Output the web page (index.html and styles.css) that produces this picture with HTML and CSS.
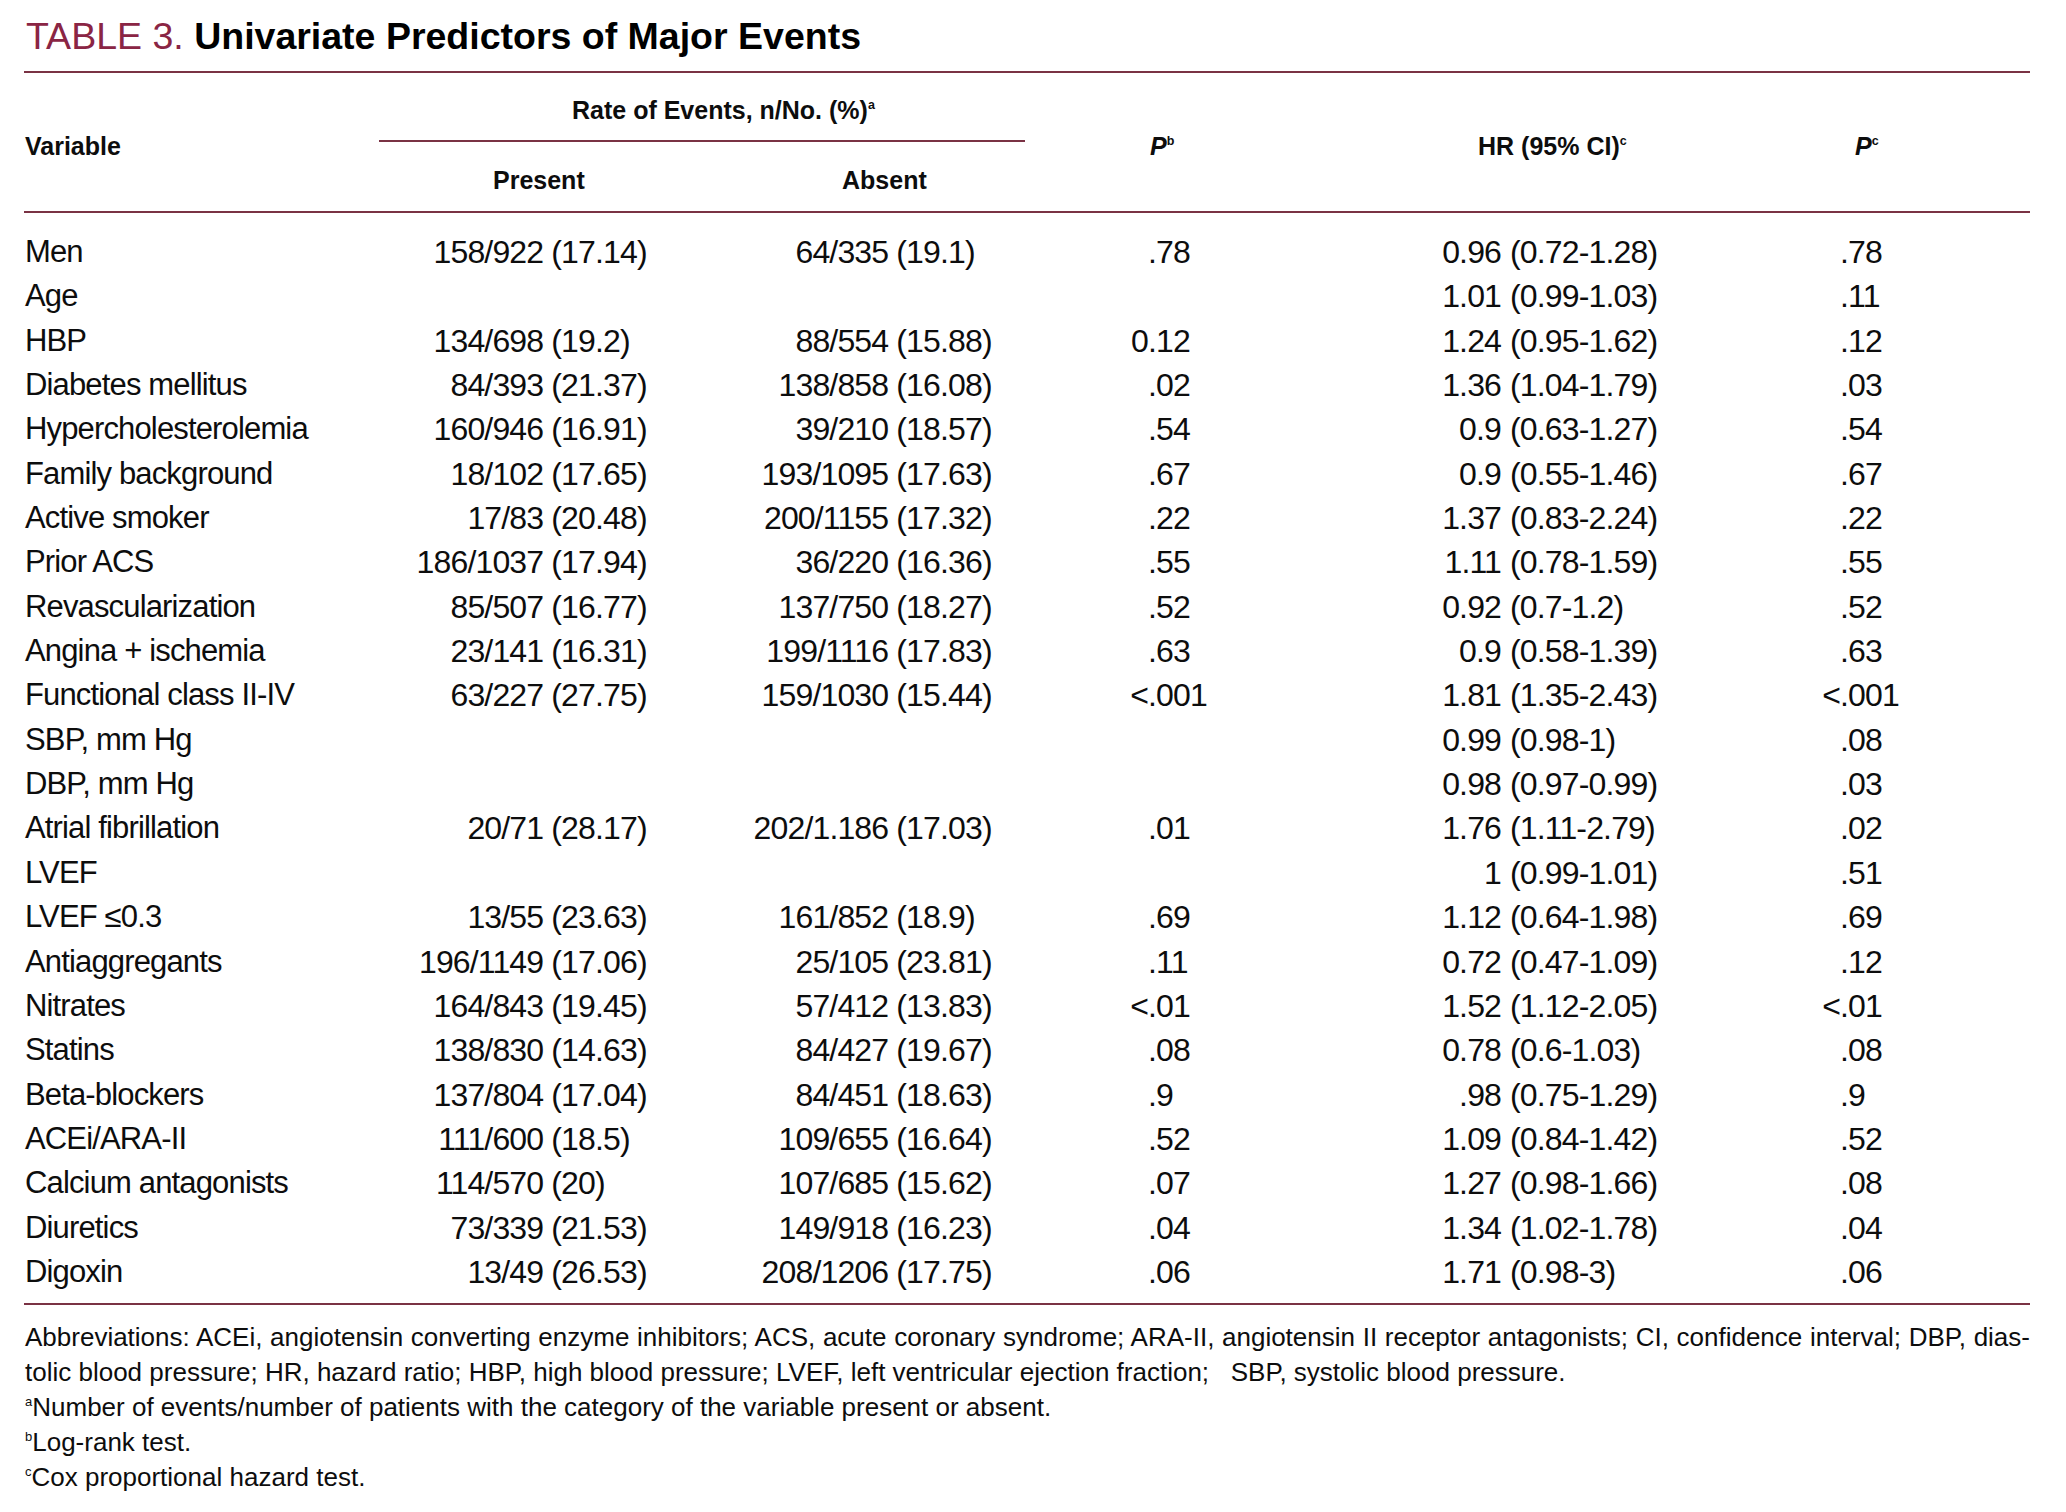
FILE: index.html
```html
<!DOCTYPE html>
<html lang="en">
<head>
<meta charset="utf-8">
<title>Table 3. Univariate Predictors of Major Events</title>
<link rel="stylesheet" href="styles.css">
</head>
<body>
<div class="page">
  <h1 class="title"><span class="tag">TABLE 3.</span> Univariate Predictors of Major Events</h1>
  <table class="data">
    <colgroup>
      <col class="c-var"><col class="c-pi"><col class="c-pf"><col class="c-ai"><col class="c-af">
      <col class="c-qi"><col class="c-qf"><col class="c-hi"><col class="c-hf"><col class="c-ri"><col class="c-rf">
    </colgroup>
    <thead>
      <tr class="r1">
        <th rowspan="2" class="h-var">Variable</th>
        <th colspan="4" class="h-rate"><div class="rate">Rate of Events, n/No. (%)<sup>a</sup></div></th>
        <th colspan="2" rowspan="2" class="h-p"><i>P</i><sup>b</sup></th>
        <th colspan="2" rowspan="2" class="h-hr">HR (95% CI)<sup>c</sup></th>
        <th colspan="2" rowspan="2" class="h-pc"><i>P</i><sup>c</sup></th>
      </tr>
      <tr class="r2">
        <th colspan="2" class="h-present">Present</th>
        <th colspan="2" class="h-absent">Absent</th>
      </tr>
    </thead>
    <tbody>
      <tr><td class="var">Men</td><td class="ni">158/922 (17</td><td class="nf">.14)</td><td class="ni">64/335 (19</td><td class="nf">.1)</td><td class="ni"></td><td class="nf">.78</td><td class="ni">0.96</td><td class="nf ci">(0.72-1.28)</td><td class="ni"></td><td class="nf">.78</td></tr>
      <tr><td class="var">Age</td><td class="ni"></td><td class="nf"></td><td class="ni"></td><td class="nf"></td><td class="ni"></td><td class="nf"></td><td class="ni">1.01</td><td class="nf ci">(0.99-1.03)</td><td class="ni"></td><td class="nf">.11</td></tr>
      <tr><td class="var">HBP</td><td class="ni">134/698 (19</td><td class="nf">.2)</td><td class="ni">88/554 (15</td><td class="nf">.88)</td><td class="ni">0</td><td class="nf">.12</td><td class="ni">1.24</td><td class="nf ci">(0.95-1.62)</td><td class="ni"></td><td class="nf">.12</td></tr>
      <tr><td class="var">Diabetes mellitus</td><td class="ni">84/393 (21</td><td class="nf">.37)</td><td class="ni">138/858 (16</td><td class="nf">.08)</td><td class="ni"></td><td class="nf">.02</td><td class="ni">1.36</td><td class="nf ci">(1.04-1.79)</td><td class="ni"></td><td class="nf">.03</td></tr>
      <tr><td class="var">Hypercholesterolemia</td><td class="ni">160/946 (16</td><td class="nf">.91)</td><td class="ni">39/210 (18</td><td class="nf">.57)</td><td class="ni"></td><td class="nf">.54</td><td class="ni">0.9</td><td class="nf ci">(0.63-1.27)</td><td class="ni"></td><td class="nf">.54</td></tr>
      <tr><td class="var">Family background</td><td class="ni">18/102 (17</td><td class="nf">.65)</td><td class="ni">193/1095 (17</td><td class="nf">.63)</td><td class="ni"></td><td class="nf">.67</td><td class="ni">0.9</td><td class="nf ci">(0.55-1.46)</td><td class="ni"></td><td class="nf">.67</td></tr>
      <tr><td class="var">Active smoker</td><td class="ni">17/83 (20</td><td class="nf">.48)</td><td class="ni">200/1155 (17</td><td class="nf">.32)</td><td class="ni"></td><td class="nf">.22</td><td class="ni">1.37</td><td class="nf ci">(0.83-2.24)</td><td class="ni"></td><td class="nf">.22</td></tr>
      <tr><td class="var">Prior ACS</td><td class="ni">186/1037 (17</td><td class="nf">.94)</td><td class="ni">36/220 (16</td><td class="nf">.36)</td><td class="ni"></td><td class="nf">.55</td><td class="ni">1.11</td><td class="nf ci">(0.78-1.59)</td><td class="ni"></td><td class="nf">.55</td></tr>
      <tr><td class="var">Revascularization</td><td class="ni">85/507 (16</td><td class="nf">.77)</td><td class="ni">137/750 (18</td><td class="nf">.27)</td><td class="ni"></td><td class="nf">.52</td><td class="ni">0.92</td><td class="nf ci">(0.7-1.2)</td><td class="ni"></td><td class="nf">.52</td></tr>
      <tr><td class="var">Angina + ischemia</td><td class="ni">23/141 (16</td><td class="nf">.31)</td><td class="ni">199/1116 (17</td><td class="nf">.83)</td><td class="ni"></td><td class="nf">.63</td><td class="ni">0.9</td><td class="nf ci">(0.58-1.39)</td><td class="ni"></td><td class="nf">.63</td></tr>
      <tr><td class="var">Functional class II-IV</td><td class="ni">63/227 (27</td><td class="nf">.75)</td><td class="ni">159/1030 (15</td><td class="nf">.44)</td><td class="ni">&lt;</td><td class="nf">.001</td><td class="ni">1.81</td><td class="nf ci">(1.35-2.43)</td><td class="ni">&lt;</td><td class="nf">.001</td></tr>
      <tr><td class="var">SBP, mm Hg</td><td class="ni"></td><td class="nf"></td><td class="ni"></td><td class="nf"></td><td class="ni"></td><td class="nf"></td><td class="ni">0.99</td><td class="nf ci">(0.98-1)</td><td class="ni"></td><td class="nf">.08</td></tr>
      <tr><td class="var">DBP, mm Hg</td><td class="ni"></td><td class="nf"></td><td class="ni"></td><td class="nf"></td><td class="ni"></td><td class="nf"></td><td class="ni">0.98</td><td class="nf ci">(0.97-0.99)</td><td class="ni"></td><td class="nf">.03</td></tr>
      <tr><td class="var">Atrial fibrillation</td><td class="ni">20/71 (28</td><td class="nf">.17)</td><td class="ni">202/1.186 (17</td><td class="nf">.03)</td><td class="ni"></td><td class="nf">.01</td><td class="ni">1.76</td><td class="nf ci">(1.11-2.79)</td><td class="ni"></td><td class="nf">.02</td></tr>
      <tr><td class="var">LVEF</td><td class="ni"></td><td class="nf"></td><td class="ni"></td><td class="nf"></td><td class="ni"></td><td class="nf"></td><td class="ni">1</td><td class="nf ci">(0.99-1.01)</td><td class="ni"></td><td class="nf">.51</td></tr>
      <tr><td class="var">LVEF ≤0.3</td><td class="ni">13/55 (23</td><td class="nf">.63)</td><td class="ni">161/852 (18</td><td class="nf">.9)</td><td class="ni"></td><td class="nf">.69</td><td class="ni">1.12</td><td class="nf ci">(0.64-1.98)</td><td class="ni"></td><td class="nf">.69</td></tr>
      <tr><td class="var">Antiaggregants</td><td class="ni">196/1149 (17</td><td class="nf">.06)</td><td class="ni">25/105 (23</td><td class="nf">.81)</td><td class="ni"></td><td class="nf">.11</td><td class="ni">0.72</td><td class="nf ci">(0.47-1.09)</td><td class="ni"></td><td class="nf">.12</td></tr>
      <tr><td class="var">Nitrates</td><td class="ni">164/843 (19</td><td class="nf">.45)</td><td class="ni">57/412 (13</td><td class="nf">.83)</td><td class="ni">&lt;</td><td class="nf">.01</td><td class="ni">1.52</td><td class="nf ci">(1.12-2.05)</td><td class="ni">&lt;</td><td class="nf">.01</td></tr>
      <tr><td class="var">Statins</td><td class="ni">138/830 (14</td><td class="nf">.63)</td><td class="ni">84/427 (19</td><td class="nf">.67)</td><td class="ni"></td><td class="nf">.08</td><td class="ni">0.78</td><td class="nf ci">(0.6-1.03)</td><td class="ni"></td><td class="nf">.08</td></tr>
      <tr><td class="var">Beta-blockers</td><td class="ni">137/804 (17</td><td class="nf">.04)</td><td class="ni">84/451 (18</td><td class="nf">.63)</td><td class="ni"></td><td class="nf">.9</td><td class="ni">.98</td><td class="nf ci">(0.75-1.29)</td><td class="ni"></td><td class="nf">.9</td></tr>
      <tr><td class="var">ACEi/ARA-II</td><td class="ni">111/600 (18</td><td class="nf">.5)</td><td class="ni">109/655 (16</td><td class="nf">.64)</td><td class="ni"></td><td class="nf">.52</td><td class="ni">1.09</td><td class="nf ci">(0.84-1.42)</td><td class="ni"></td><td class="nf">.52</td></tr>
      <tr><td class="var">Calcium antagonists</td><td class="ni">114/570 (20</td><td class="nf">)</td><td class="ni">107/685 (15</td><td class="nf">.62)</td><td class="ni"></td><td class="nf">.07</td><td class="ni">1.27</td><td class="nf ci">(0.98-1.66)</td><td class="ni"></td><td class="nf">.08</td></tr>
      <tr><td class="var">Diuretics</td><td class="ni">73/339 (21</td><td class="nf">.53)</td><td class="ni">149/918 (16</td><td class="nf">.23)</td><td class="ni"></td><td class="nf">.04</td><td class="ni">1.34</td><td class="nf ci">(1.02-1.78)</td><td class="ni"></td><td class="nf">.04</td></tr>
      <tr><td class="var">Digoxin</td><td class="ni">13/49 (26</td><td class="nf">.53)</td><td class="ni">208/1206 (17</td><td class="nf">.75)</td><td class="ni"></td><td class="nf">.06</td><td class="ni">1.71</td><td class="nf ci">(0.98-3)</td><td class="ni"></td><td class="nf">.06</td></tr>
    </tbody>
  </table>
  <div class="notes">
    <p class="just">Abbreviations: ACEi, angiotensin converting enzyme inhibitors; ACS, acute coronary syndrome; ARA-II, angiotensin II receptor antagonists; CI, confidence interval; DBP, dias-</p>
    <p>tolic blood pressure; HR, hazard ratio; HBP, high blood pressure; LVEF, left ventricular ejection fraction;&nbsp;&nbsp; SBP, systolic blood pressure.</p>
    <p><sup>a</sup>Number of events/number of patients with the category of the variable present or absent.</p>
    <p><sup>b</sup>Log-rank test.</p>
    <p><sup>c</sup>Cox proportional hazard test.</p>
  </div>
</div>
</body>
</html>
```

FILE: styles.css
```css
html, body {
  margin: 0;
  padding: 0;
  background: #ffffff;
}

body {
  font-family: "Liberation Sans", Arial, sans-serif;
  color: #0d0d0d;
}

.page {
  width: 2006px;
  padding-left: 24px;
}

.title {
  margin: 0 0 13px 2px;
  padding-top: 14px;
  font-size: 37.5px;
  line-height: 44px;
  font-weight: bold;
  color: #000;
}

.title .tag {
  font-weight: normal;
  color: #8a2544;
}

.data {
  width: 2006px;
  table-layout: fixed;
  border-collapse: collapse;
  border-spacing: 0;
}

.c-var { width: 326px; }
.c-pi { width: 245px; }
.c-pf { width: 105px; }
.c-ai { width: 240px; }
.c-af { width: 110px; }
.c-qi { width: 98px; }
.c-qf { width: 152px; }
.c-hi { width: 201px; }
.c-hf { width: 249px; }
.c-ri { width: 90px; }
.c-rf { width: 190px; }

.data thead {
  border-top: 2px solid #7a3244;
  border-bottom: 2px solid #7a3244;
}

.data tbody {
  border-bottom: 2px solid #7a3244;
}

.data th {
  padding: 0;
  font-size: 25px;
  font-weight: bold;
  text-align: left;
  vertical-align: middle;
  white-space: nowrap;
}

.data th i {
  font-style: italic;
}

.data sup,
.notes sup {
  font-size: 0.5em;
  line-height: 0;
  vertical-align: 0.8em;
}

.data th.h-var,
.data th.h-p,
.data th.h-hr,
.data th.h-pc {
  padding-top: 8px;
}

.data th.h-var { padding-left: 1px; }

.data th.h-rate {
  vertical-align: bottom;
}

.rate {
  margin: 0 25px 0 29px;
  padding-left: 193px;
  padding-top: 8px;
  height: 59px;
  line-height: 59px;
  border-bottom: 2px solid #7a3244;
}

.data th.h-present,
.data th.h-absent {
  height: 61px;
  padding-top: 8px;
}

.data th.h-present { padding-left: 143px; }
.data th.h-absent { padding-left: 142px; }
.data th.h-p { padding-left: 100px; }
.data th.h-hr { padding-left: 178px; }
.data th.h-pc { padding-left: 105px; }

.data td {
  padding: 0;
  font-size: 32px;
  letter-spacing: -0.85px;
  line-height: 44.34px;
  white-space: nowrap;
  vertical-align: middle;
}

.data tbody tr:first-child td {
  padding-top: 17px;
}

.data tbody tr:last-child td {
  padding-bottom: 9px;
}

.data td.var {
  padding-left: 1px;
  font-size: 31px;
}

.data td.ni {
  text-align: right;
}

.data td.nf {
  text-align: left;
}

.data td.ci {
  padding-left: 9px;
}

.notes {
  width: 2005px;
  padding-left: 1px;
  padding-top: 15px;
  font-size: 26px;
  line-height: 35px;
}

.notes p {
  margin: 0;
  white-space: nowrap;
}

.notes p.just {
  white-space: normal;
  text-align: justify;
  text-align-last: justify;
}
```
